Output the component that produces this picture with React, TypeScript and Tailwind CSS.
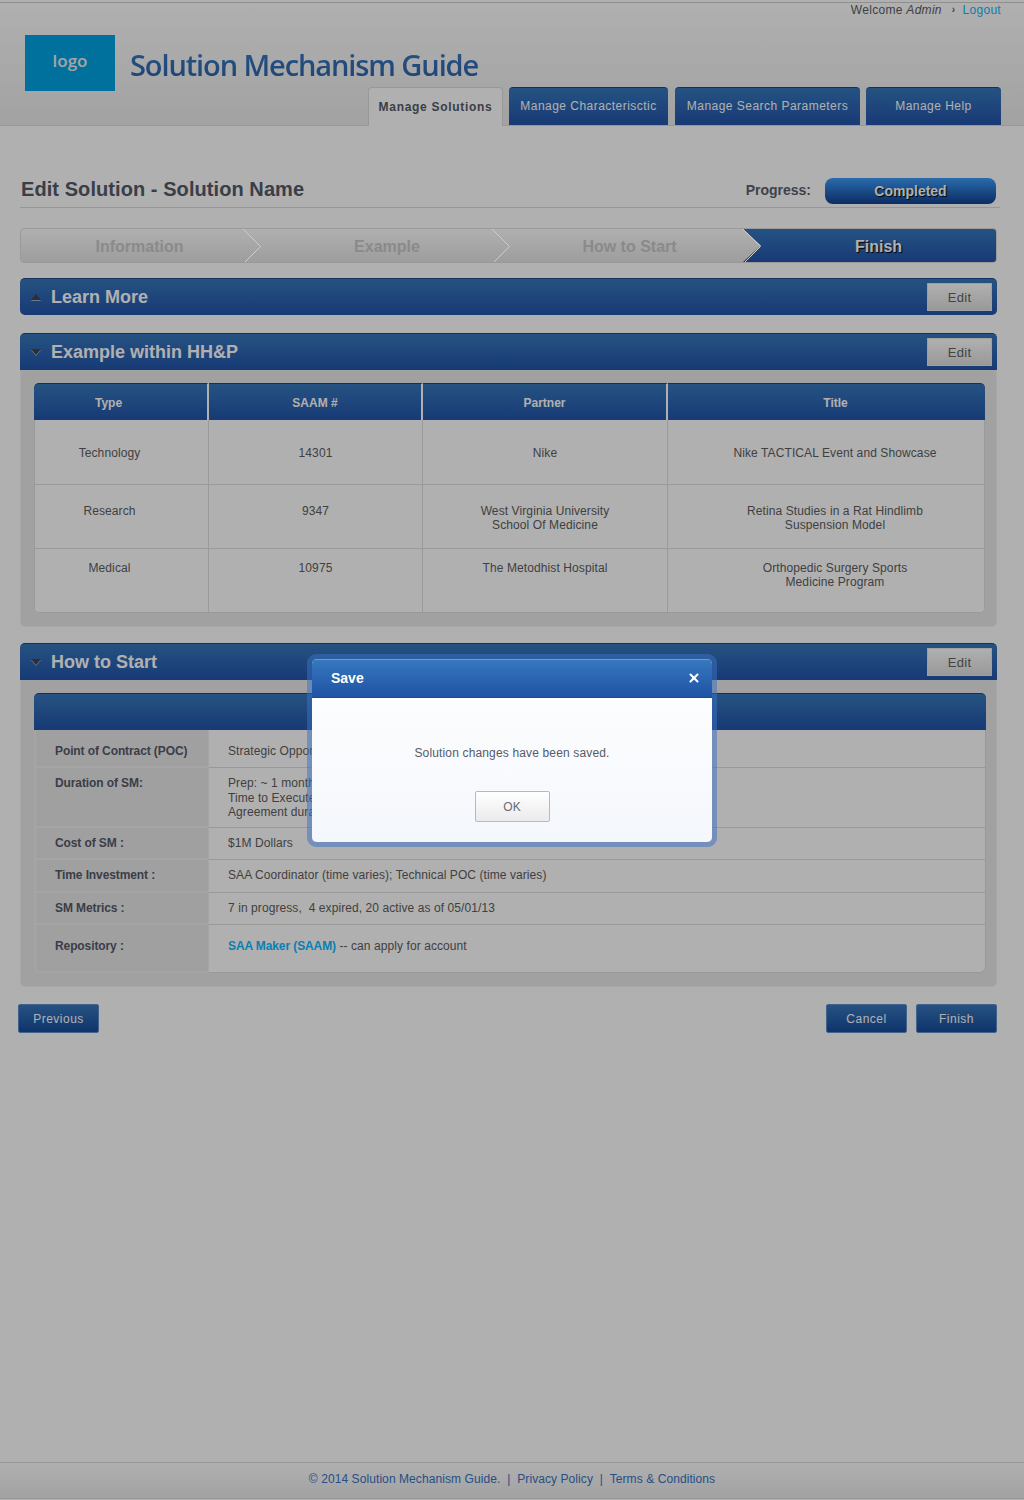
import React from "react";
import { X } from "lucide-react";

const blueBar = "bg-linear-to-b from-[#3778bc] to-[#2354aa]";

const NavTab: React.FC<{ label: string; width: string; active?: boolean }> = ({ label, width, active }) =>
  active ? (
    <div className={`${width} relative -mb-px h-[39px] rounded-t-[4px] border border-b-0 border-[#dcdcdc] bg-white pt-[12px] text-center text-[12px] font-bold leading-[14px] tracking-[0.7px] text-[#555a68]`}>
      {label}
    </div>
  ) : (
    <div className={`${width} ${blueBar} h-[38px] rounded-t-[4px] border-t border-[#1d468a] pt-[11px] text-center text-[12px] leading-[14px] tracking-[0.47px] text-white`}>
      {label}
    </div>
  );

const Chevron: React.FC<{ place: string }> = ({ place }) => (
  <svg width="18" height="35" viewBox="0 0 18 35" className={`absolute top-0 z-10 ${place}`} fill="none">
    <polyline points="0,0 17.5,17.5 0,35" stroke="#cdcdcd" strokeWidth="1" />
  </svg>
);

const Step: React.FC<{ label: string; width: string; place: string }> = ({ label, width, place }) => (
  <div className={`${width} relative flex h-full items-center justify-center pt-[2px] text-[16px] font-bold text-[#c8c8c8]`}>
    {label}
    <Chevron place={place} />
  </div>
);

const SectionBar: React.FC<{ title: string; open?: boolean }> = ({ title, open }) => (
  <div className={`${blueBar} flex h-[37px] items-center border-t border-[#1d468a] pl-[11px] pr-[5px] ${open ? "rounded-t-[5px]" : "rounded-[5px]"}`}>
    <svg width="10" height="6" viewBox="0 0 10 6" className="shrink-0 fill-[#444444] drop-shadow-[0_1px_0_rgba(255,255,255,0.5)]">
      <polygon points={open ? "0,0 10,0 5,6" : "5,0 10,6 0,6"} />
    </svg>
    <div className="ml-[10px] text-[18px] font-bold leading-[20px] text-white">{title}</div>
    <button className="ml-auto h-[28px] w-[65px] border border-[#e6e6e6] bg-linear-to-b from-white to-[#dedede] pt-px text-[13px] tracking-[0.3px] text-[#636363]">
      Edit
    </button>
  </div>
);

const examples = [
  { type: "Technology", saam: "14301", partner: ["Nike"], title: ["Nike TACTICAL Event and Showcase"], rowClass: "h-[65px] align-top", padClass: "pt-[26px]" },
  { type: "Research", saam: "9347", partner: ["West Virginia University", "School Of Medicine"], title: ["Retina Studies in a Rat Hindlimb", "Suspension Model"], rowClass: "h-[64px] align-top", padClass: "pt-[19px]" },
  { type: "Medical", saam: "10975", partner: ["The Metodhist Hospital"], title: ["Orthopedic Surgery Sports", "Medicine Program"], rowClass: "h-[64px] align-top", padClass: "pt-[12px]" },
];

const thClass = `${blueBar} h-[37px] border-t border-[#1d468a] pt-px text-center text-[12px] font-bold text-white`;
const tdClass = "border-b border-r border-[#e0e0e0] text-center text-[12px] leading-[14.4px] tracking-[0.1px] text-[#5d5d5d]";

const ExampleTable: React.FC = () => (
  <table className="w-[951px] table-fixed border-separate border-spacing-0">
    <colgroup>
      <col className="w-[175px]" />
      <col className="w-[214px]" />
      <col className="w-[245px]" />
      <col className="w-[317px]" />
    </colgroup>
    <thead>
      <tr>
        <th className={`${thClass} rounded-tl-[5px] border-r-2 border-r-white pr-[24px]`}>Type</th>
        <th className={`${thClass} border-r-2 border-r-white`}>SAAM #</th>
        <th className={`${thClass} border-r-2 border-r-white`}>Partner</th>
        <th className={`${thClass} rounded-tr-[5px] pl-[18px]`}>Title</th>
      </tr>
    </thead>
    <tbody className="bg-white">
      {examples.map((row, i) => (
        <tr key={row.type}>
          <td className={`${tdClass} ${row.rowClass} ${row.padClass} border-l pr-[24px] ${i === 2 ? "rounded-bl-[5px]" : ""}`}>{row.type}</td>
          <td className={`${tdClass} ${row.rowClass} ${row.padClass}`}>{row.saam}</td>
          <td className={`${tdClass} ${row.rowClass} ${row.padClass}`}>
            {row.partner.map((line) => (
              <div key={line}>{line}</div>
            ))}
          </td>
          <td className={`${tdClass} ${row.rowClass} ${row.padClass} pl-[18px] ${i === 2 ? "rounded-br-[5px]" : ""}`}>
            {row.title.map((line) => (
              <div key={line}>{line}</div>
            ))}
          </td>
        </tr>
      ))}
    </tbody>
  </table>
);

const startRows: { label: string; height: string; pad: string; value: React.ReactNode }[] = [
  { label: "Point of Contract (POC)", height: "h-[38px]", pad: "pt-[14px]", value: "Strategic Opportunities Team and the assigned Alliance Manager for the partner network" },
  {
    label: "Duration of SM:",
    height: "h-[60px]",
    pad: "pt-[8px]",
    value: (
      <>
        <div>Prep: ~ 1 month</div>
        <div>Time to Execute</div>
        <div>Agreement duration</div>
      </>
    ),
  },
  { label: "Cost of SM :", height: "h-[32px]", pad: "pt-[8px]", value: "$1M Dollars" },
  { label: "Time Investment :", height: "h-[33px]", pad: "pt-[8px]", value: "SAA Coordinator (time varies); Technical POC (time varies)" },
  { label: "SM Metrics :", height: "h-[32px]", pad: "pt-[8px]", value: "7 in progress,  4 expired, 20 active as of 05/01/13" },
  {
    label: "Repository :",
    height: "h-[48px]",
    pad: "pt-[14px]",
    value: (
      <>
        <a className="font-bold tracking-[-0.1px] text-[#0eb8ff]">SAA Maker (SAAM)</a> -- can apply for account
      </>
    ),
  },
];

const StartTable: React.FC = () => (
  <table className="w-[952px] table-fixed border-separate border-spacing-0">
    <colgroup>
      <col className="w-[175px]" />
      <col />
    </colgroup>
    <thead>
      <tr>
        <th colSpan={2} className={`${blueBar} h-[37px] rounded-t-[5px] border-t border-[#1d468a]`} />
      </tr>
    </thead>
    <tbody>
      {startRows.map((row, i) => {
        const last = i === startRows.length - 1;
        return (
          <tr key={row.label}>
            <td className={`${row.height} ${row.pad} ${last ? "rounded-bl-[6px]" : ""} border-b-2 border-l-2 border-r border-b-[#f0f0f0] border-l-[#f0f0f0] border-r-[#f0f0f0] bg-[#e8e8e8] pl-[19px] align-top text-[12px] font-bold leading-[14px] tracking-[-0.1px] text-[#555a68]`}>
              {row.label}
            </td>
            <td className={`${row.height} ${row.pad} ${last ? "rounded-br-[6px]" : ""} whitespace-pre-wrap border-b border-r border-[#dedede] bg-white pl-[19px] align-top text-[12px] leading-[14.5px] tracking-[0.08px] text-[#5d5d5d]`}>
              {row.value}
            </td>
          </tr>
        );
      })}
    </tbody>
  </table>
);

const FlatButton: React.FC<{ label: string }> = ({ label }) => (
  <button className="h-[29px] w-[81px] rounded-[2px] border border-[#5f8fcc] bg-linear-to-b from-[#3778bc] to-[#1a4a9e] pt-px text-[12px] tracking-[0.5px] text-white">
    {label}
  </button>
);

const SaveDialog: React.FC = () => (
  <div className="absolute left-[307px] top-[654px] h-[193px] w-[410px] rounded-[9px] border-[5px] border-[rgba(58,113,196,0.51)] bg-clip-padding">
    <div className="flex h-full flex-col overflow-hidden rounded-[5px] bg-linear-to-b from-white to-[#f4f7fc]">
      <div className="flex h-[39px] items-center justify-between border-b border-[#1d4a96] bg-linear-to-b from-[#3779bf] to-[#2052a5] pl-[19px] pr-[11px] shadow-[inset_0_1px_0_#6c9ad6]">
        <div className="text-[14px] font-bold text-white">Save</div>
        <X size={14} strokeWidth={3.5} className="text-white" />
      </div>
      <div className="mt-[48px] text-center text-[12px] leading-[14px] tracking-[0.15px] text-[#555a68]">
        Solution changes have been saved.
      </div>
      <button className="mx-auto mt-[31px] h-[31px] w-[75px] rounded-[2px] border border-[#a7bcd8] bg-linear-to-b from-white to-[#ebebeb] text-[12px] text-[#666b78]">
        OK
      </button>
    </div>
  </div>
);

export default function App() {
  return (
    <div className="relative flex min-h-[1500px] flex-col bg-white pt-[2px] font-['Liberation_Sans',Arial,sans-serif]">
      <header className="h-[124px] border-b border-t border-[#dcdcdc] border-t-[#cfcfcf] bg-linear-to-b from-white to-[#ebebeb]">
        <div className="flex h-[14px] items-center justify-end pr-[23px] text-[12px] tracking-[0.3px] text-[#5d5d5d]">
          <span>
            Welcome <i>Admin</i>
          </span>
          <span className="ml-[10px] mr-[7px] text-[10px] font-bold leading-none">›</span>
          <a className="text-[#0eb8ff]">Logout</a>
        </div>
        <div className="mt-[18px] flex pl-[25px]">
          <div className="flex h-[56px] w-[90px] justify-center bg-[#00a2e2] pt-[11px] font-['Open_Sans',sans-serif] text-[17px] font-semibold leading-[30px] text-[#f0f0f0]">
            logo
          </div>
          <div className="ml-[15px] mt-[10px] h-fit bg-linear-to-b from-[#3a7cc2] to-[#2b60a8] bg-clip-text font-['Open_Sans',sans-serif] text-[29px] font-semibold leading-[40px] tracking-[-1.1px] text-transparent">
            Solution Mechanism Guide
          </div>
        </div>
        <nav className="-mt-[4px] flex justify-end pr-[23px]">
          <NavTab label="Manage Solutions" width="w-[135px] mr-[6px]" active />
          <NavTab label="Manage Characterisctic" width="w-[159px] mr-[7px]" />
          <NavTab label="Manage Search Parameters" width="w-[185px] mr-[6px]" />
          <NavTab label="Manage Help" width="w-[135px]" />
        </nav>
      </header>

      <main className="pl-[20px] pt-[52px]">
        <div className="flex h-[30px] w-[980px] items-start border-b border-[#dcdcdc] pl-[1px] pr-[4px]">
          <h1 className="text-[20px] font-bold leading-[23px] tracking-[0.07px] text-[#555a68]">Edit Solution - Solution Name</h1>
          <div className="ml-auto text-[14px] font-bold leading-[25px] text-[#5d606b]">Progress:</div>
          <div className="ml-[14px] flex h-[26px] w-[171px] items-center justify-center rounded-[8px] bg-linear-to-b from-[#3e9dfa] to-[#134090] text-[14px] font-bold text-white [text-shadow:1px_1px_1px_#000]">
            Completed
          </div>
        </div>

        <div className="relative mt-[20px] flex h-[35px] w-[977px] overflow-hidden rounded-[4px] border border-[#e0e0e0] bg-linear-to-b from-white to-[#e4e4e4]">
          <Step label="Information" width="w-[237px]" place="right-[-3px]" />
          <Step label="Example" width="w-[258px]" place="right-[6px]" />
          <Step label="How to Start" width="w-[227px]" place="left-full" />
          <div className="flex flex-1 items-center justify-center bg-linear-to-b from-[#3778bc] to-[#2354aa] pl-[18px] pt-[2px] text-[16px] font-bold text-white [clip-path:polygon(0_0,100%_0,100%_100%,0_100%,18px_50%)] [text-shadow:1px_1px_1px_#000]">
            Finish
          </div>
        </div>

        <section className="mt-[15px] w-[977px]">
          <SectionBar title="Learn More" />
        </section>

        <section className="mt-[18px] w-[977px]">
          <SectionBar title="Example within HH&P" open />
          <div className="rounded-b-[5px] border border-t-0 border-[#f4f4f4] bg-[#eaeaea] pb-[13px] pl-[13px] pt-[13px]">
            <ExampleTable />
          </div>
        </section>

        <section className="mt-[16px] w-[977px]">
          <SectionBar title="How to Start" open />
          <div className="rounded-b-[5px] border border-t-0 border-[#f4f4f4] bg-[#eaeaea] pb-[13px] pl-[13px] pt-[13px]">
            <StartTable />
          </div>
        </section>

        <div className="-ml-[2px] mt-[17px] flex w-[979px]">
          <FlatButton label="Previous" />
          <div className="ml-auto flex gap-[9px]">
            <FlatButton label="Cancel" />
            <FlatButton label="Finish" />
          </div>
        </div>
      </main>

      <footer className="mt-auto mb-px flex h-[37px] items-center justify-center whitespace-pre border-b border-t border-[#dcdcdc] bg-linear-to-b from-white to-[#ebebeb] pb-[3px] text-[12px] tracking-[0.08px] text-[#3773c1]">
        © 2014 Solution Mechanism Guide.  |  Privacy Policy  |  Terms &amp; Conditions
      </footer>

      <div className="absolute inset-0 bg-black/[0.31]" />
      <SaveDialog />
    </div>
  );
}
